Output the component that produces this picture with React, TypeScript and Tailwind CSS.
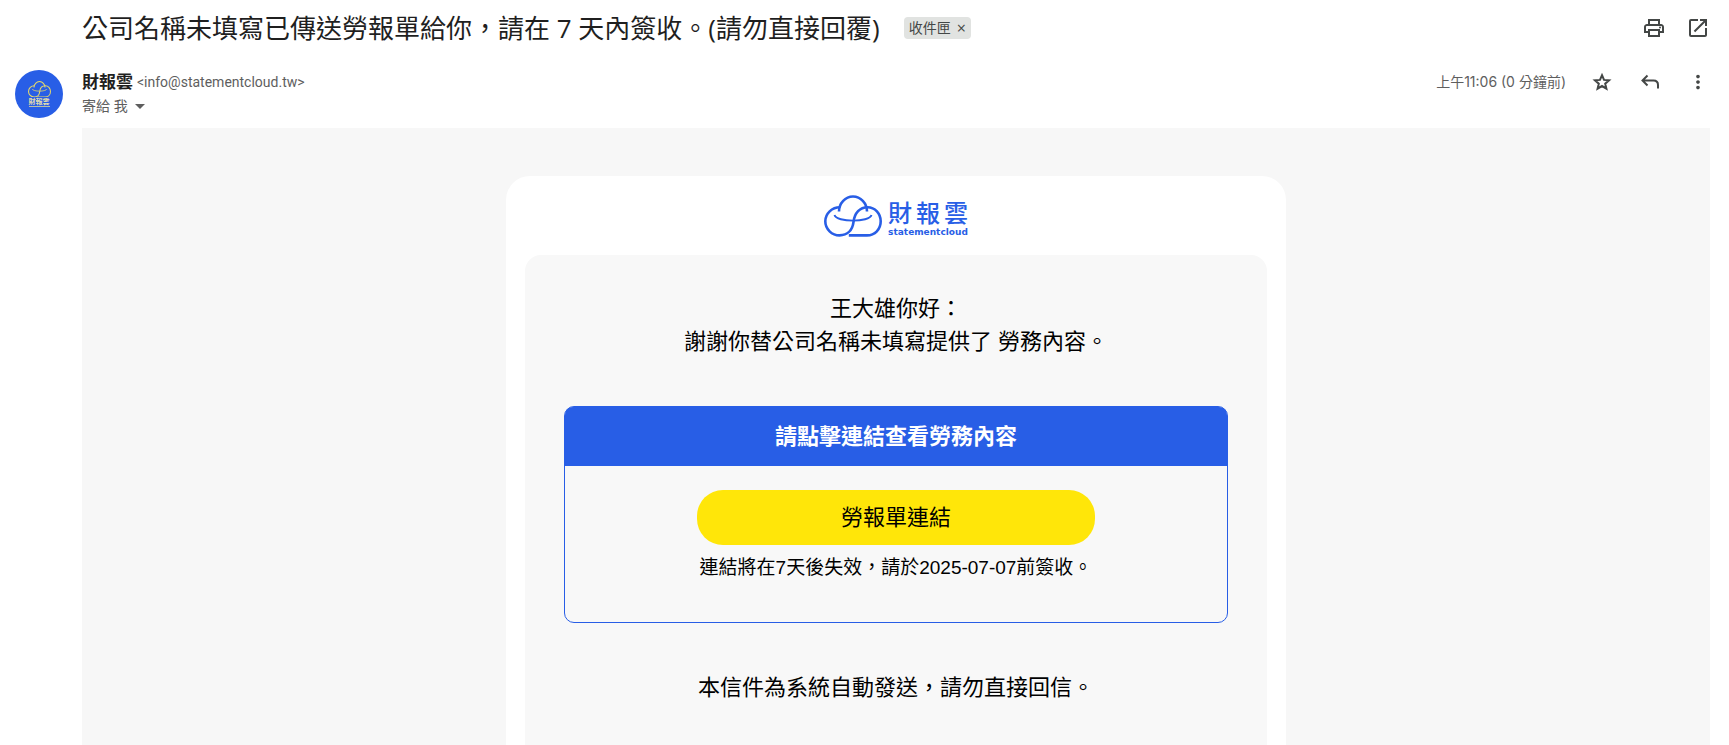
import React from 'react';
import { MdArrowDropDown, MdMoreVert, MdOpenInNew, MdOutlinePrint } from 'react-icons/md';

interface IconButtonProps {
  label: string;
  children: React.ReactNode;
}

const IconButton: React.FC<IconButtonProps> = ({ label, children }) => (
  <button type="button" aria-label={label} title={label} className="flex size-6 items-center justify-center text-[#444746]">
    {children}
  </button>
);

const StarIcon: React.FC = () => (
  <svg viewBox="0 0 24 24" className="size-[22px]" fill="none" stroke="currentColor" strokeWidth="2.2" aria-hidden="true">
    <path d="M12 4.600L14.200 9.700L19.700 10.200L15.500 13.800L16.800 19.300L12 16.400L7.200 19.300L8.500 13.800L4.300 10.200L9.800 9.700Z" />
  </svg>
);

const ReplyIcon: React.FC = () => (
  <svg viewBox="0 0 24 24" className="size-6" fill="none" stroke="currentColor" strokeWidth="2" aria-hidden="true">
    <path d="M9.500 5.500L4.500 10.500L9.500 15.500M4.500 10.500H15.500C18.200 10.500 20 12.300 20 15V18.500" />
  </svg>
);

const CloudMark: React.FC<{ className?: string }> = ({ className }) => (
  <svg viewBox="0 0 58 42" className={className} fill="none" stroke="currentColor" strokeWidth="2.6" aria-hidden="true">
    <path d="M15 16.5C15 8 21.500 1.500 29 1.500C36.500 1.500 43 8 43 16.500" />
    <path d="M16 12.200C8 12.200 1.300 18.500 1.300 26.300C1.300 34.200 8 40.400 15.500 40.400C23.500 40.400 28.500 35 29.500 27C30.500 18 36 12.200 43.500 12.200C51 12.200 56.700 18.500 56.700 26.300C56.700 34.200 51 40.400 43 40.400H24.800" />
    <path d="M10.500 20C12.500 27.500 45.500 27.500 47.500 20" strokeWidth="1.9" />
  </svg>
);

const MailHeader: React.FC = () => (
  <header>
    <div className="flex items-center pt-2 pr-[19px] pl-[82px]">
      <h1 className="text-[26px] leading-10 text-[#1f1f1f]">
        公司名稱未填寫已傳送勞報單給你，請在 7 天內簽收。(請勿直接回覆)
      </h1>
      <span className="ml-6 flex h-[22px] items-center gap-1.5 rounded bg-[#e1e3e1] px-[5px] text-sm text-[#444746]">
        收件匣
        <button type="button" aria-label="移除標籤" className="text-base">×</button>
      </span>
      <div className="ml-auto flex gap-5">
        <IconButton label="全部列印"><MdOutlinePrint size={24} /></IconButton>
        <IconButton label="在新視窗中開啟"><MdOpenInNew size={24} /></IconButton>
      </div>
    </div>

    <div className="flex items-start pt-[22px] pr-[19px] pb-2.5 pl-[15px]">
      <div className="flex size-12 shrink-0 flex-col items-center justify-center rounded-full bg-[#285ee6]">
        <CloudMark className="w-[23px] text-[#e8da68]" />
        <span className="border-b border-[#b9bfa8] text-[7px] leading-[9px] font-bold text-[#e0dcae]">財報雲</span>
      </div>
      <div className="ml-[19px] text-sm text-[#5e5e5e]">
        <div className="flex h-6 items-center gap-1">
          <span className="text-[17px] font-bold text-[#1f1f1f]">財報雲</span>
          <span className="font-['Roboto',sans-serif]">&lt;info@statementcloud.tw&gt;</span>
        </div>
        <button type="button" className="flex h-6 items-center">
          寄給 我
          <MdArrowDropDown size={24} />
        </button>
      </div>
      <div className="ml-auto flex h-6 items-center text-sm text-[#5e5e5e]">
        <span className="mr-6 font-['Inter','Noto_Sans_CJK_TC',sans-serif]">上午11:06 (0 分鐘前)</span>
        <div className="flex gap-6">
          <IconButton label="加星號"><StarIcon /></IconButton>
          <IconButton label="回覆"><ReplyIcon /></IconButton>
          <IconButton label="更多"><MdMoreVert size={22} /></IconButton>
        </div>
      </div>
    </div>
  </header>
);

const MailBody: React.FC = () => (
  <main className="mr-[19px] ml-[82px] grow overflow-hidden bg-[#f7f7f7] pt-12 font-['Liberation_Sans','Noto_Sans_CJK_TC',sans-serif] text-[22px] leading-[33px] text-black">
    <div className="mx-auto max-w-[780px] rounded-t-3xl bg-white px-[19px]">
      <div className="flex h-[79px] items-center justify-center gap-1.5 text-[#285ee6]">
        <CloudMark className="w-[58px]" />
        <div className="flex flex-col pt-2">
          <span className="flex justify-between text-2xl leading-6 font-medium">
            <span>財</span><span>報</span><span>雲</span>
          </span>
          <span className="font-['DejaVu_Sans',sans-serif] text-[9px] leading-3 font-bold">statementcloud</span>
        </div>
      </div>
      <div className="rounded-t-2xl bg-[#f8f8f8] px-[39px] pt-[37px] pb-16 text-center">
        <p>王大雄你好：</p>
        <p>謝謝你替公司名稱未填寫提供了 勞務內容。</p>
        <section className="mt-12 rounded-[10px] border border-[#285ee6]">
          <h2 className="rounded-t-lg bg-[#285ee6] py-[13px] font-bold text-white">請點擊連結查看勞務內容</h2>
          <div className="px-6 pt-6 pb-[38px]">
            <a href="#" className="mx-auto block max-w-[398px] rounded-[26px] bg-[#ffe609] py-[11px]">勞報單連結</a>
            <p className="mt-1.5 text-[19px]">連結將在7天後失效，請於2025-07-07前簽收。</p>
          </div>
        </section>
        <p className="mt-12">本信件為系統自動發送，請勿直接回信。</p>
      </div>
    </div>
  </main>
);

const App: React.FC = () => (
  <div className="flex h-screen flex-col overflow-hidden bg-white font-['Open_Sans','Noto_Sans_CJK_TC',sans-serif]">
    <MailHeader />
    <MailBody />
  </div>
);

export default App;
